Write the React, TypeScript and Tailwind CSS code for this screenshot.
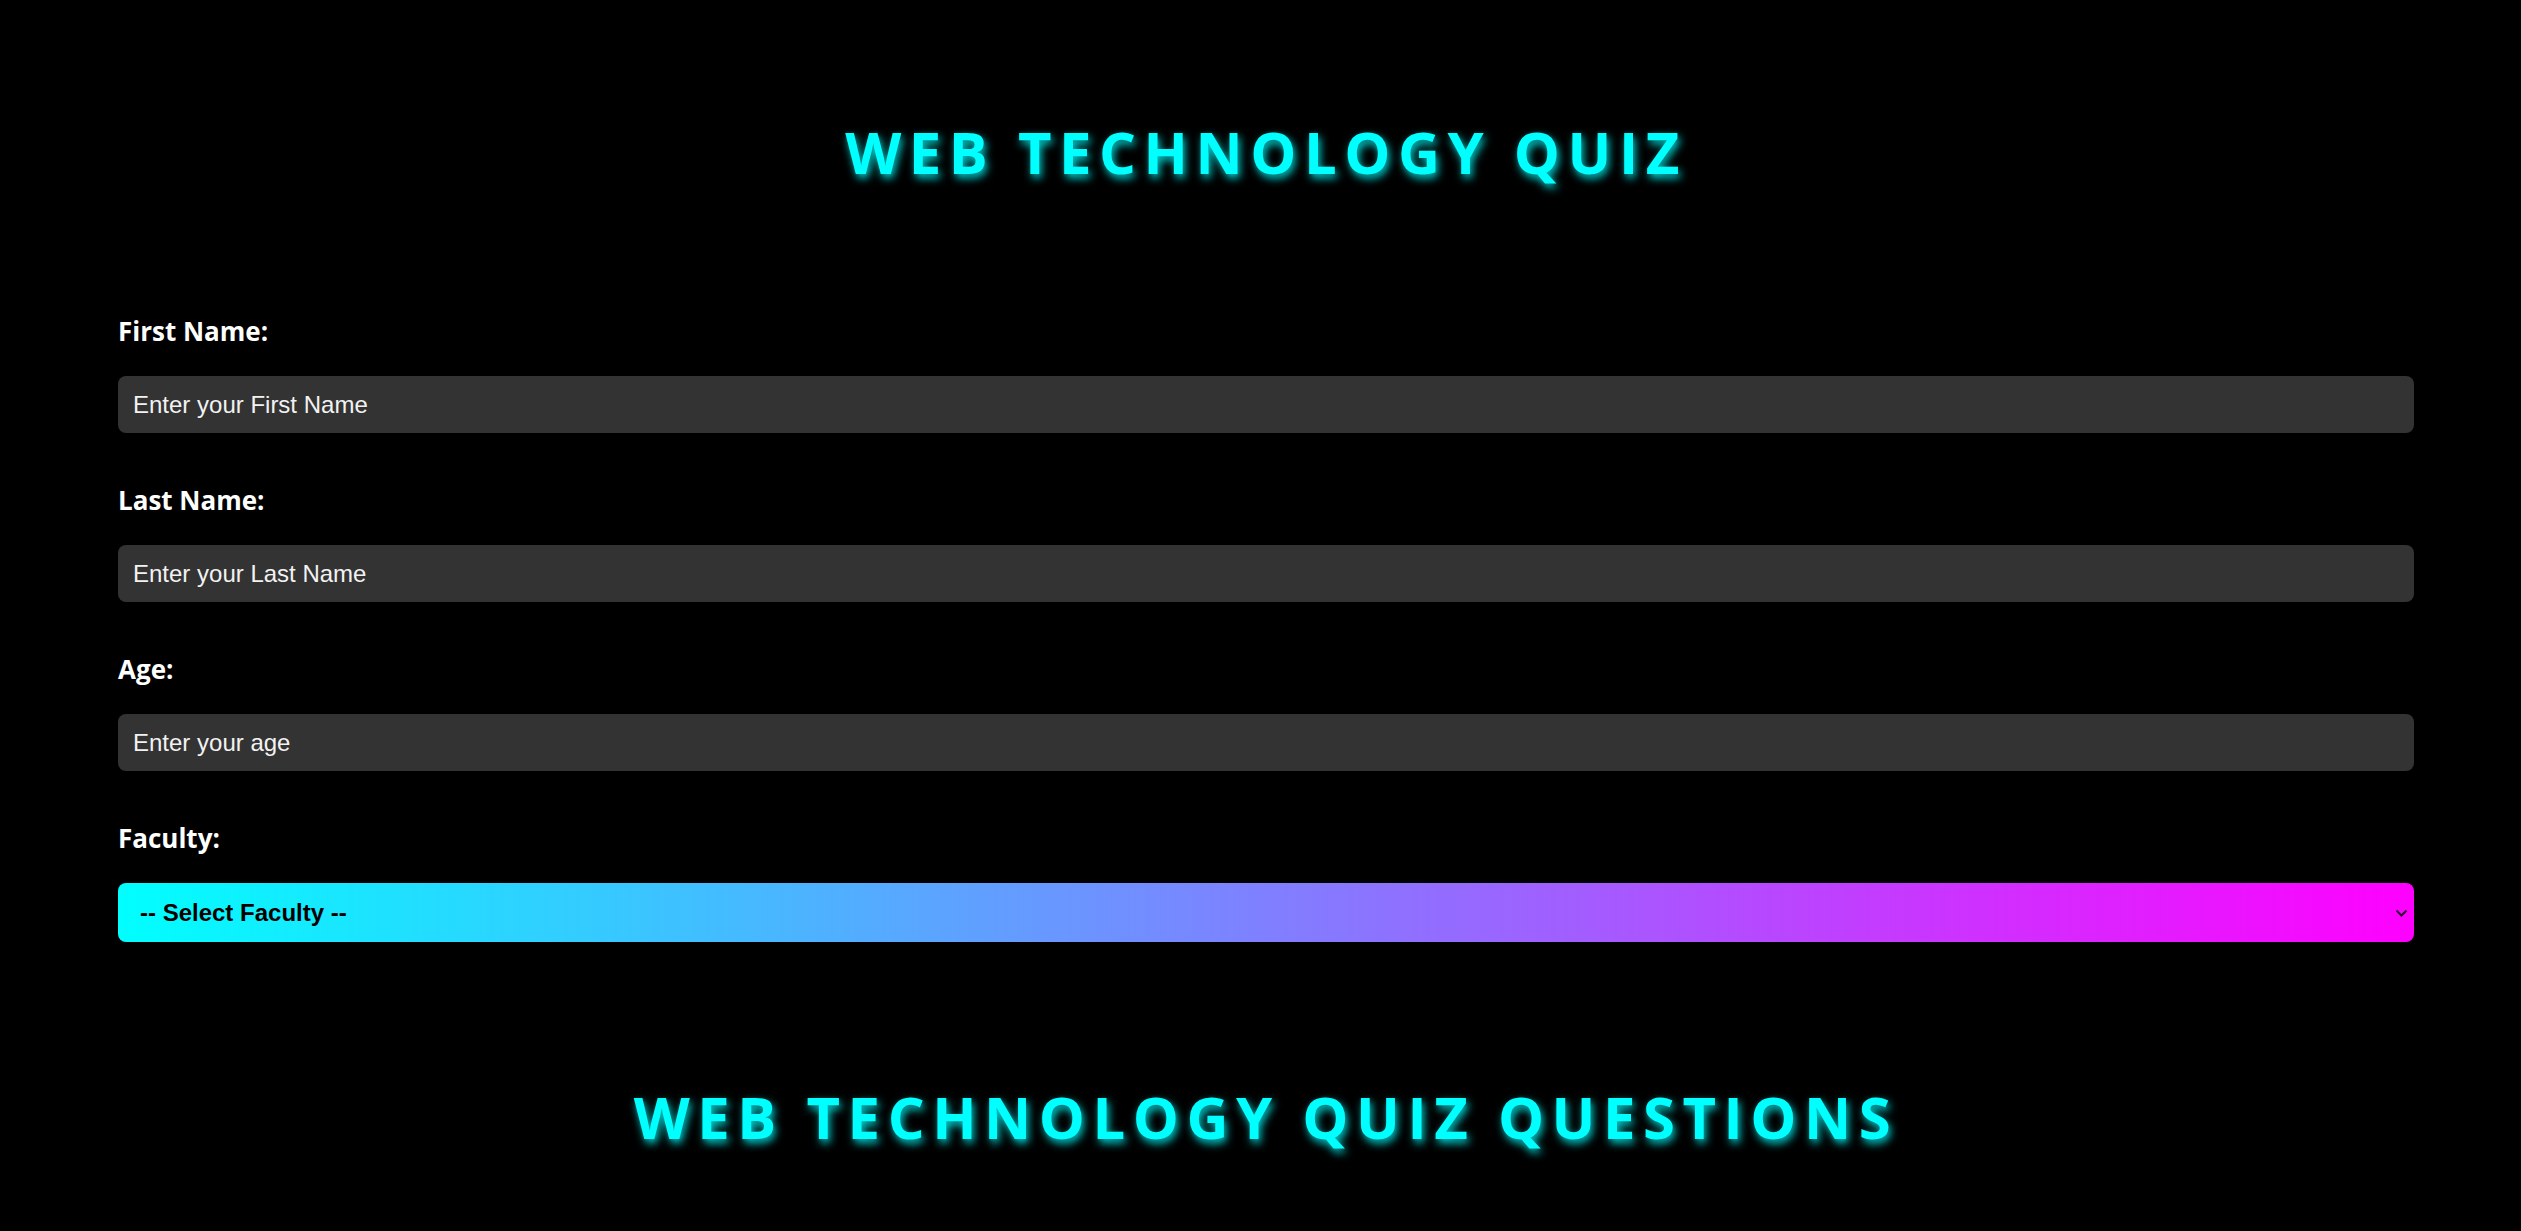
import { useState } from "react";

const titleClass =
  "text-center font-['Open_Sans',sans-serif] text-[58px] font-bold uppercase leading-none tracking-[0.13em] text-[#00ffff] [text-shadow:2px_4px_8px_rgba(0,255,255,0.85)]";

const labelClass = "mb-[32px] block font-['Open_Sans',sans-serif] text-[26px] font-bold leading-none text-white";

const inputClass =
  "block h-[57px] w-full rounded-lg bg-[#333333] px-[15px] font-['Liberation_Sans',Arial,sans-serif] text-[24px] text-white outline-none placeholder:text-[#f2f2f2]";

type Field = {
  id: string;
  label: string;
  placeholder: string;
};

const fields: Field[] = [
  { id: "firstName", label: "First Name:", placeholder: "Enter your First Name" },
  { id: "lastName", label: "Last Name:", placeholder: "Enter your Last Name" },
  { id: "age", label: "Age:", placeholder: "Enter your age" },
];

export default function App() {
  const [values, setValues] = useState<Record<string, string>>({});
  const [faculty, setFaculty] = useState("");

  return (
    <main className="min-h-screen bg-black pb-20 pl-[118px] pr-[107px] pt-[123px]">
      <h1 className={titleClass}>Web Technology Quiz</h1>

      <form className="mt-[137px]" onSubmit={(event) => event.preventDefault()}>
        {fields.map((field) => (
          <div key={field.id} className="mb-[54px]">
            <label htmlFor={field.id} className={labelClass}>
              {field.label}
            </label>
            <input
              id={field.id}
              type="text"
              value={values[field.id] ?? ""}
              onChange={(event) => setValues({ ...values, [field.id]: event.target.value })}
              placeholder={field.placeholder}
              className={inputClass}
            />
          </div>
        ))}

        <div>
          <label htmlFor="faculty" className={labelClass}>
            Faculty:
          </label>
          <div className="relative">
            <select
              id="faculty"
              value={faculty}
              onChange={(event) => setFaculty(event.target.value)}
              className="block h-[59px] w-full appearance-none rounded-lg bg-[linear-gradient(to_right,#00ffff,#ff00ff)] pl-[22px] pr-10 font-['Liberation_Sans',Arial,sans-serif] text-[24px] font-bold text-black outline-none"
            >
              <option value="">-- Select Faculty --</option>
              <option value="it">Information Technology</option>
              <option value="cs">Computer Science</option>
              <option value="se">Software Engineering</option>
            </select>
            <svg
              className="pointer-events-none absolute right-[6px] top-1/2 h-[8px] w-[13px] -translate-y-1/2"
              viewBox="0 0 13 8"
              fill="none"
            >
              <path d="M1.5 1.5 6.5 6.5 11.5 1.5" stroke="#2a1030" strokeWidth="2" />
            </svg>
          </div>
        </div>
      </form>

      <h2 className={`mt-[146px] ${titleClass}`}>Web Technology Quiz Questions</h2>
    </main>
  );
}
